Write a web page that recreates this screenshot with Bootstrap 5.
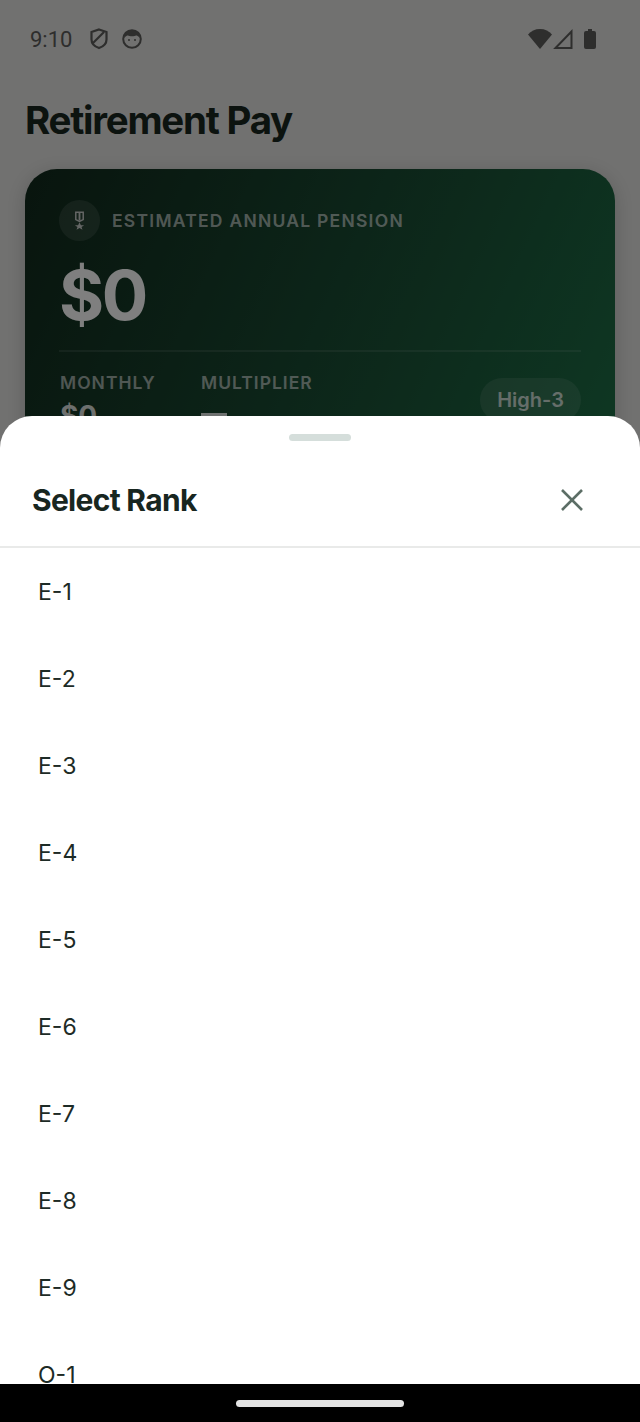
<!DOCTYPE html>
<html lang="en">
<head>
  <meta charset="UTF-8">
  <meta name="viewport" content="width=device-width, initial-scale=1.0">
  <title>Retirement Pay</title>
  <link href="https://cdn.jsdelivr.net/npm/bootstrap@5.3.0/dist/css/bootstrap.min.css" rel="stylesheet">
  <style>
    html, body { height: 100%; }
    body { background: #e2e2e0; font-family: Inter, "Liberation Sans", sans-serif; overflow: hidden; }
    .phone { height: 1422px; overflow: hidden; }
    .status-row { height: 78px; padding: 0 44px 0 30px; color: #5c5c5a; }
    .status-time { font-family: Roboto, sans-serif; font-size: 22px; margin-right: 18px; }
    .page-title { font-size: 38.500px; font-weight: 700; letter-spacing: -1.250px; color: #18261f; line-height: 44px; margin: 20px 0 27px 25px; }
    .pension-card { margin: 0 25px; height: 300px; border-radius: 32px; padding: 31px 34px; background: linear-gradient(115deg, #11291c 0%, #194a32 50%, #1d7047 100%); color: #fff; box-shadow: 0 4px 18px rgba(0,0,0,.18); }
    .medal-dot { width: 41px; height: 41px; background: rgba(255,255,255,.1); border-radius: 50%; }
    .eyebrow { font-size: 17.500px; font-weight: 600; letter-spacing: 1.250px; color: rgba(255,255,255,.62); padding-top: 1px; }
    .big-amount { font-size: 69px; font-weight: 700; line-height: 84px; letter-spacing: -2.500px; margin-top: 12px; }
    .card-rule { border-top: 2px solid rgba(255,255,255,.1); margin-top: 13px; }
    .stat-row { margin-top: 20px; padding-left: 1px; }
    .stat-label { font-size: 17.500px; font-weight: 600; letter-spacing: 1px; color: rgba(255,255,255,.6); line-height: 22px; }
    .stat-value { font-size: 28px; font-weight: 700; line-height: 32px; color: rgba(255,255,255,.85); margin-top: 6px; }
    .dash-value { width: 26px; height: 12px; background: rgba(255,255,255,.85); margin-top: 19px; }
    .high-pill { background: rgba(255,255,255,.1); border-radius: 22px; padding: 0 17px; height: 44px; line-height: 44px; font-size: 20px; font-weight: 600; color: rgba(255,255,255,.75); margin-top: 6px; }
    .scrim { inset: 0; background: rgba(0,0,0,.5); }
    .rank-sheet { left: 0; right: 0; top: 416px; bottom: 38px; background: #fff; border-radius: 32px 32px 0 0; overflow: hidden; }
    .sheet-handle { width: 62px; height: 7px; border-radius: 4px; background: #d5dedb; margin: 18px auto 0; }
    .sheet-head { height: 107px; padding: 14px 56px 0 32px; border-bottom: 2px solid #e9eae9; }
    .sheet-title { font-size: 30px; font-weight: 700; letter-spacing: -.700px; color: #18261f; }
    .sheet-close { margin-top: -2px; }
    .rank-item { height: 87px; padding: 2px 38px 0; font-size: 23px; color: #1d2b26; border: 0; }
    .nav-strip { left: 0; right: 0; bottom: 0; height: 38px; background: #000; }
    .nav-pill { width: 168px; height: 7px; border-radius: 4px; background: #e4e4e4; }
  </style>
</head>
<body>
  <div class="phone position-relative">
    <div class="status-row d-flex align-items-center">
      <span class="status-time">9:10</span>
      <svg width="18" height="22" viewBox="0 0 18 22" fill="none" stroke="#5c5c5a" stroke-width="2.200"><path d="M9 1.500l7.500 2.500v7.500c0 4-3 7-7.500 8.500C4.500 18.500 1.500 15.500 1.500 11.500V4z"/><path d="M3 15L14 4"/></svg>
      <svg style="margin-left:14px" width="20" height="20" viewBox="0 0 20 20"><circle cx="10" cy="10" r="8.800" fill="none" stroke="#5c5c5a" stroke-width="2"/><path d="M2 9a8 8 0 0 1 16 0c-2-2-3-2.500-4-2.500-1 1-7 1-8 0-1 0-2 .5-4 2.500z" fill="#5c5c5a"/><circle cx="7" cy="11" r="1" fill="#5c5c5a"/><circle cx="13" cy="11" r="1" fill="#5c5c5a"/></svg>
      <svg class="ms-auto" width="24" height="20" viewBox="0 0 24 20"><path d="M0 5.500C3 2 7 0 12 0s9 2 12 5.500L12 20z" fill="#5c5c5a"/></svg>
      <svg style="margin-left:1px" width="20" height="20" viewBox="0 0 20 20" fill="none" stroke="#5c5c5a" stroke-width="2"><path d="M18.500 2.500V19H2.500z"/></svg>
      <svg style="margin-left:11px" width="12" height="20" viewBox="0 0 12 20"><path d="M4 0h4v2h2a2 2 0 0 1 2 2v14a2 2 0 0 1-2 2H2a2 2 0 0 1-2-2V4a2 2 0 0 1 2-2h2z" fill="#5c5c5a"/></svg>
    </div>
    <h1 class="page-title">Retirement Pay</h1>
    <div class="pension-card">
      <div class="d-flex align-items-center gap-2">
        <div class="medal-dot d-flex align-items-center justify-content-center flex-shrink-0">
          <svg width="13" height="19" viewBox="0 0 14 20"><path d="M3 1h8v8l-4 2-4-2z" fill="none" stroke="#c9ccca" stroke-width="1.600"/><path d="M6 1h2v9H6z" fill="#c9ccca"/><path d="M7 12l1.500 3H12l-2.800 2 1 3L7 18.200 3.800 20l1-3L2 15h3.500z" fill="#c9ccca"/></svg>
        </div>
        <span class="eyebrow ms-1">ESTIMATED ANNUAL PENSION</span>
      </div>
      <div class="big-amount">$0</div>
      <div class="card-rule"></div>
      <div class="stat-row d-flex">
        <div style="width:141px">
          <div class="stat-label">MONTHLY</div>
          <div class="stat-value">$0</div>
        </div>
        <div>
          <div class="stat-label">MULTIPLIER</div>
          <div class="dash-value"></div>
        </div>
        <div class="high-pill ms-auto">High-3</div>
      </div>
    </div>

    <div class="scrim position-absolute"></div>

    <div class="rank-sheet position-absolute">
      <div class="sheet-handle"></div>
      <div class="sheet-head d-flex align-items-center justify-content-between">
        <span class="sheet-title">Select Rank</span>
        <svg class="sheet-close" width="24" height="24" viewBox="0 0 24 24" stroke="#5c6e66" stroke-width="2.600" fill="none"><path d="M2 2l20 20M22 2L2 22"/></svg>
      </div>
      <div class="list-group list-group-flush">
        <div class="list-group-item rank-item d-flex align-items-center">E-1</div>
        <div class="list-group-item rank-item d-flex align-items-center">E-2</div>
        <div class="list-group-item rank-item d-flex align-items-center">E-3</div>
        <div class="list-group-item rank-item d-flex align-items-center">E-4</div>
        <div class="list-group-item rank-item d-flex align-items-center">E-5</div>
        <div class="list-group-item rank-item d-flex align-items-center">E-6</div>
        <div class="list-group-item rank-item d-flex align-items-center">E-7</div>
        <div class="list-group-item rank-item d-flex align-items-center">E-8</div>
        <div class="list-group-item rank-item d-flex align-items-center">E-9</div>
        <div class="list-group-item rank-item d-flex align-items-center">O-1</div>
      </div>
    </div>

    <div class="nav-strip position-absolute d-flex align-items-center justify-content-center">
      <div class="nav-pill"></div>
    </div>
  </div>
  <script src="https://cdn.jsdelivr.net/npm/bootstrap@5.3.0/dist/js/bootstrap.bundle.min.js"></script>
</body>
</html>
